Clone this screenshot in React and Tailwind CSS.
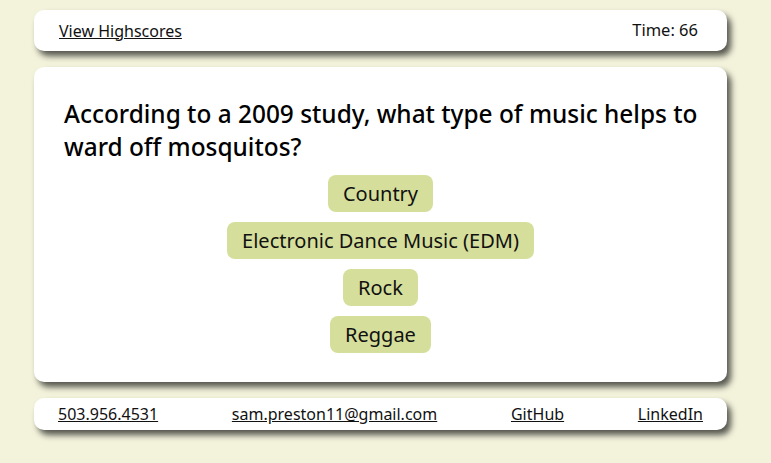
const answers = ["Country", "Electronic Dance Music (EDM)", "Rock", "Reggae"];

const cardShadow = "shadow-[4px_5px_6px_rgba(0,0,0,0.65)]";

export default function App() {
  return (
    <div
      className="min-h-[463px] w-full bg-[#f3f3dc] pt-[10px] text-[#111]"
      style={{ fontFamily: '"Noto Sans", "Open Sans", sans-serif' }}
    >
      {/* header */}
      <header
        className={`ml-[34px] flex h-[41px] w-[693px] items-center justify-between rounded-[10px] bg-white px-[25px] text-[16px] ${cardShadow}`}
      >
        <a href="#" className="underline">View Highscores</a>
        <span className="pr-[4px] text-[16.5px]">Time: 66</span>
      </header>

      {/* quiz */}
      <main
        className={`ml-[34px] mt-[16px] flex h-[315px] w-[693px] flex-col rounded-[10px] bg-white pl-[30px] pr-[20px] pt-[30px] ${cardShadow}`}
      >
        <h1 className="text-[24.4px] font-medium leading-[33px] text-black">
          According to a 2009 study, what type of music helps to ward off mosquitos?
        </h1>
        <div className="mt-[12px] flex flex-col items-center gap-[10px] pr-[10px]">
          {answers.map((a) => (
            <button
              key={a}
              className="h-[37px] rounded-[8px] bg-[#d5df9b] px-[15px] pt-[1px] text-[20px] leading-[36px]"
            >
              {a}
            </button>
          ))}
        </div>
      </main>

      {/* footer */}
      <footer
        className={`ml-[34px] mt-[16px] flex h-[32px] w-[693px] items-center justify-between rounded-[10px] bg-white px-[24px] text-[16px] ${cardShadow}`}
      >
        <a href="#" className="underline">503.956.4531</a>
        <a href="#" className="underline">sam.preston11@gmail.com</a>
        <a href="#" className="underline">GitHub</a>
        <a href="#" className="underline">LinkedIn</a>
      </footer>
    </div>
  );
}
